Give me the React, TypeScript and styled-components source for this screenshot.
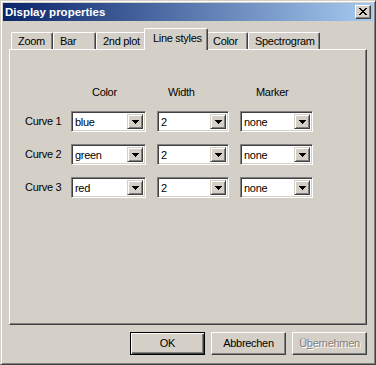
import React from 'react';
import styled, { createGlobalStyle } from 'styled-components';

const Global = createGlobalStyle`
  html, body { margin: 0; padding: 0; background: #D4D0C8; }
  body { font-family: "Liberation Sans", Arial, sans-serif; font-size: 11px; letter-spacing: -0.3px; color: #000; }
  * { box-sizing: border-box; }
`;

const Window = styled.div`
  width: 376px;
  height: 365px;
  background: #D4D0C8;
  border: 1px solid;
  border-color: #D4D0C8 #404040 #404040 #D4D0C8;
  box-shadow: inset 1px 1px 0 #fff, inset -1px -1px 0 #808080;
  padding: 2px;
  display: flex;
  flex-direction: column;
`;

const TitleBar = styled.div`
  height: 18px;
  display: flex;
  align-items: center;
  justify-content: space-between;
  padding: 0 2px;
  background: linear-gradient(to right, #0A246A, #A6CAF0);
`;

const Title = styled.span`
  color: #fff;
  font-weight: bold;
  font-size: 11.5px;
  letter-spacing: 0;
  line-height: 13px;
`;

const CaptionButton = styled.div`
  width: 16px;
  height: 14px;
  background: #D4D0C8;
  border: 1px solid;
  border-color: #fff #404040 #404040 #fff;
  box-shadow: inset -1px -1px 0 #808080;
  display: flex;
  align-items: center;
  justify-content: center;
  padding-bottom: 1px;
`;

const Body = styled.div`
  flex: 1;
  display: flex;
  flex-direction: column;
  padding: 7px 6px 0 6px;
`;

const TabStrip = styled.div`
  display: flex;
  align-items: flex-end;
  height: 22px;
  margin-bottom: -1px;
  padding-left: 2px;
  position: relative;
  z-index: 1;
`;

const Tab = styled.div<{ $w: number; $active?: boolean }>`
  width: ${(p) => p.$w + (p.$active ? 4 : 0)}px;
  height: ${(p) => (p.$active ? 22 : 17)}px;
  margin: ${(p) => (p.$active ? '0 -2px 0 -2px' : '0 0 1px 0')};
  background: #D4D0C8;
  border-top: 1px solid #fff;
  border-left: 1px solid #fff;
  border-right: 1px solid #404040;
  border-radius: 2px 2px 0 0;
  box-shadow: inset -1px 0 0 #808080;
  padding: ${(p) => (p.$active ? '3px 0 0 8px' : '2px 0 0 6px')};
  line-height: 13px;
  white-space: nowrap;
  position: relative;
  z-index: ${(p) => (p.$active ? 2 : 1)};
`;

const Panel = styled.div`
  height: 276px;
  border: 1px solid;
  border-color: #fff #404040 #404040 #fff;
  box-shadow: inset -1px -1px 0 #808080;
  padding: 36px 0 0 15px;
`;

const Grid = styled.div`
  display: grid;
  grid-template-columns: 35px 75px 72px 73px;
  column-gap: 11px;
  row-gap: 12px;
  align-items: center;
`;

const Header = styled.div<{ $indent: number }>`
  padding-left: ${(p) => p.$indent}px;
  line-height: 13px;
  height: 13px;
`;

const RowLabel = styled.div`
  white-space: nowrap;
  line-height: 13px;
`;

const Combo = styled.div`
  height: 21px;
  background: #fff;
  border: 1px solid;
  border-color: #808080 #fff #fff #808080;
  box-shadow: inset 1px 1px 0 #404040, inset -1px -1px 0 #D4D0C8;
  padding: 2px;
  display: flex;
  align-items: stretch;
`;

const ComboText = styled.div`
  flex: 1;
  padding-left: 1px;
  line-height: 17px;
  white-space: nowrap;
  overflow: hidden;
`;

const DropButton = styled.div`
  width: 16px;
  background: #D4D0C8;
  border: 1px solid;
  border-color: #D4D0C8 #404040 #404040 #D4D0C8;
  box-shadow: inset 1px 1px 0 #fff, inset -1px -1px 0 #808080;
  display: flex;
  align-items: center;
  justify-content: center;
`;

const ButtonRow = styled.div`
  display: flex;
  justify-content: flex-end;
  gap: 6px;
  margin-top: 7px;
`;

const Button = styled.div<{ $default?: boolean; $disabled?: boolean }>`
  width: 75px;
  height: 23px;
  background: #D4D0C8;
  display: flex;
  align-items: center;
  justify-content: center;
  line-height: 13px;
  border: 1px solid;
  border-color: ${(p) => (p.$default ? '#000' : '#fff #404040 #404040 #fff')};
  box-shadow: ${(p) =>
    p.$default
      ? 'inset 1px 1px 0 #fff, inset -1px -1px 0 #404040, inset -2px -2px 0 #808080'
      : 'inset -1px -1px 0 #808080'};
  color: ${(p) => (p.$disabled ? '#808080' : '#000')};
  text-shadow: ${(p) => (p.$disabled ? '1px 1px 0 #fff' : 'none')};
`;

const Accel = styled.span`
  text-decoration: underline;
`;

const CloseGlyph = () => (
  <svg width="8" height="7" viewBox="0 0 8 7" shapeRendering="crispEdges">
    <path
      d="M0 0h2v1h-2zM6 0h2v1h-2zM1 1h2v1h-2zM5 1h2v1h-2zM2 2h4v1h-4zM3 3h2v1h-2zM2 4h4v1h-4zM1 5h2v1h-2zM5 5h2v1h-2zM0 6h2v1h-2zM6 6h2v1h-2z"
      fill="#000"
    />
  </svg>
);

const Arrow = () => (
  <svg width="7" height="4" viewBox="0 0 7 4" shapeRendering="crispEdges">
    <path d="M0 0h7v1h-7zM1 1h5v1h-5zM2 2h3v1h-3zM3 3h1v1h-1z" fill="#000" />
  </svg>
);

const tabs: { label: string; w: number; active?: boolean }[] = [
  { label: 'Zoom', w: 42 },
  { label: 'Bar', w: 43 },
  { label: '2nd plot', w: 50 },
  { label: 'Line styles', w: 60, active: true },
  { label: 'Color', w: 42 },
  { label: 'Spectrogram', w: 72 },
];

const rows = [
  { label: 'Curve 1', color: 'blue' },
  { label: 'Curve 2', color: 'green' },
  { label: 'Curve 3', color: 'red' },
];

const ComboBox = ({ value }: { value: string }) => (
  <Combo>
    <ComboText>{value}</ComboText>
    <DropButton>
      <Arrow />
    </DropButton>
  </Combo>
);

export default function App() {
  return (
    <>
      <Global />
      <Window>
        <TitleBar>
          <Title>Display properties</Title>
          <CaptionButton>
            <CloseGlyph />
          </CaptionButton>
        </TitleBar>
        <Body>
          <TabStrip>
            {tabs.map((t) => (
              <Tab key={t.label} $w={t.w} $active={t.active}>
                {t.label}
              </Tab>
            ))}
          </TabStrip>
          <Panel>
            <Grid>
              <div />
              <Header $indent={21}>Color</Header>
              <Header $indent={11}>Width</Header>
              <Header $indent={16}>Marker</Header>
              {rows.map((r) => (
                <React.Fragment key={r.label}>
                  <RowLabel>{r.label}</RowLabel>
                  <ComboBox value={r.color} />
                  <ComboBox value="2" />
                  <ComboBox value="none" />
                </React.Fragment>
              ))}
            </Grid>
          </Panel>
          <ButtonRow>
            <Button $default>OK</Button>
            <Button>Abbrechen</Button>
            <Button $disabled>
              Ü<Accel>b</Accel>ernehmen
            </Button>
          </ButtonRow>
        </Body>
      </Window>
    </>
  );
}
